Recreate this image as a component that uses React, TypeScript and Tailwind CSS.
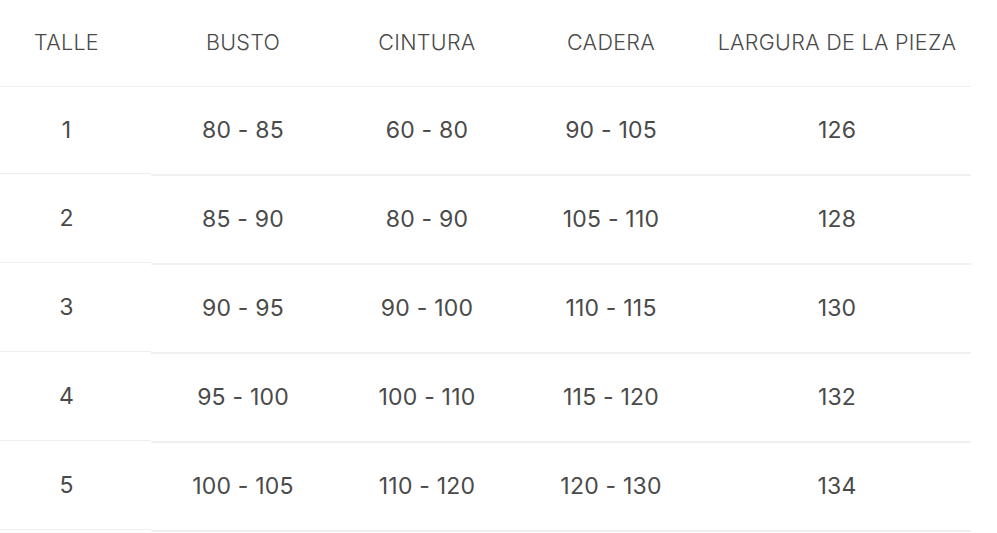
const headers = ['BUSTO', 'CINTURA', 'CADERA', 'LARGURA DE LA PIEZA'];
const rows = [
  ['1', '80 - 85', '60 - 80', '90 - 105', '126'],
  ['2', '85 - 90', '80 - 90', '105 - 110', '128'],
  ['3', '90 - 95', '90 - 100', '110 - 115', '130'],
  ['4', '95 - 100', '100 - 110', '115 - 120', '132'],
  ['5', '100 - 105', '110 - 120', '120 - 130', '134'],
];

export default function App() {
  return (
    <div className="h-[533px] w-[997px] bg-white font-['Inter',sans-serif] text-[#4a4a4a]">
      <div className="w-[971px]">
        <div className="flex h-[87px] items-center border-b border-[#efefef] pb-[2px] text-[21.5px] font-light tracking-[0.3px]">
          <div className="w-[151px] pr-[18px] text-center">TALLE</div>
          {headers.map((h, i) => (
            <div key={h} className={i === 3 ? 'flex-1 text-center' : 'w-[184px] text-center'}>
              {h}
            </div>
          ))}
        </div>
        <div className="flex text-[23px] tracking-[0.2px]">
          <div className="w-[151px] shrink-0">
            {rows.map((r, i) => (
              <div
                key={r[0]}
                className={
                  i === 0
                    ? 'flex h-[87px] items-center justify-center border-b border-[#efefef] pr-[18px]'
                    : 'flex h-[89px] items-center justify-center border-b border-[#efefef] pr-[18px]'
                }
              >
                {r[0]}
              </div>
            ))}
          </div>
          <div className="flex-1">
            {rows.map((r) => (
              <div key={r[0]} className="flex h-[89px] items-center border-b-2 border-[#f0f0f0]">
                <div className="w-[184px] text-center">{r[1]}</div>
                <div className="w-[184px] text-center">{r[2]}</div>
                <div className="w-[184px] text-center">{r[3]}</div>
                <div className="flex-1 text-center">{r[4]}</div>
              </div>
            ))}
          </div>
        </div>
      </div>
    </div>
  );
}
